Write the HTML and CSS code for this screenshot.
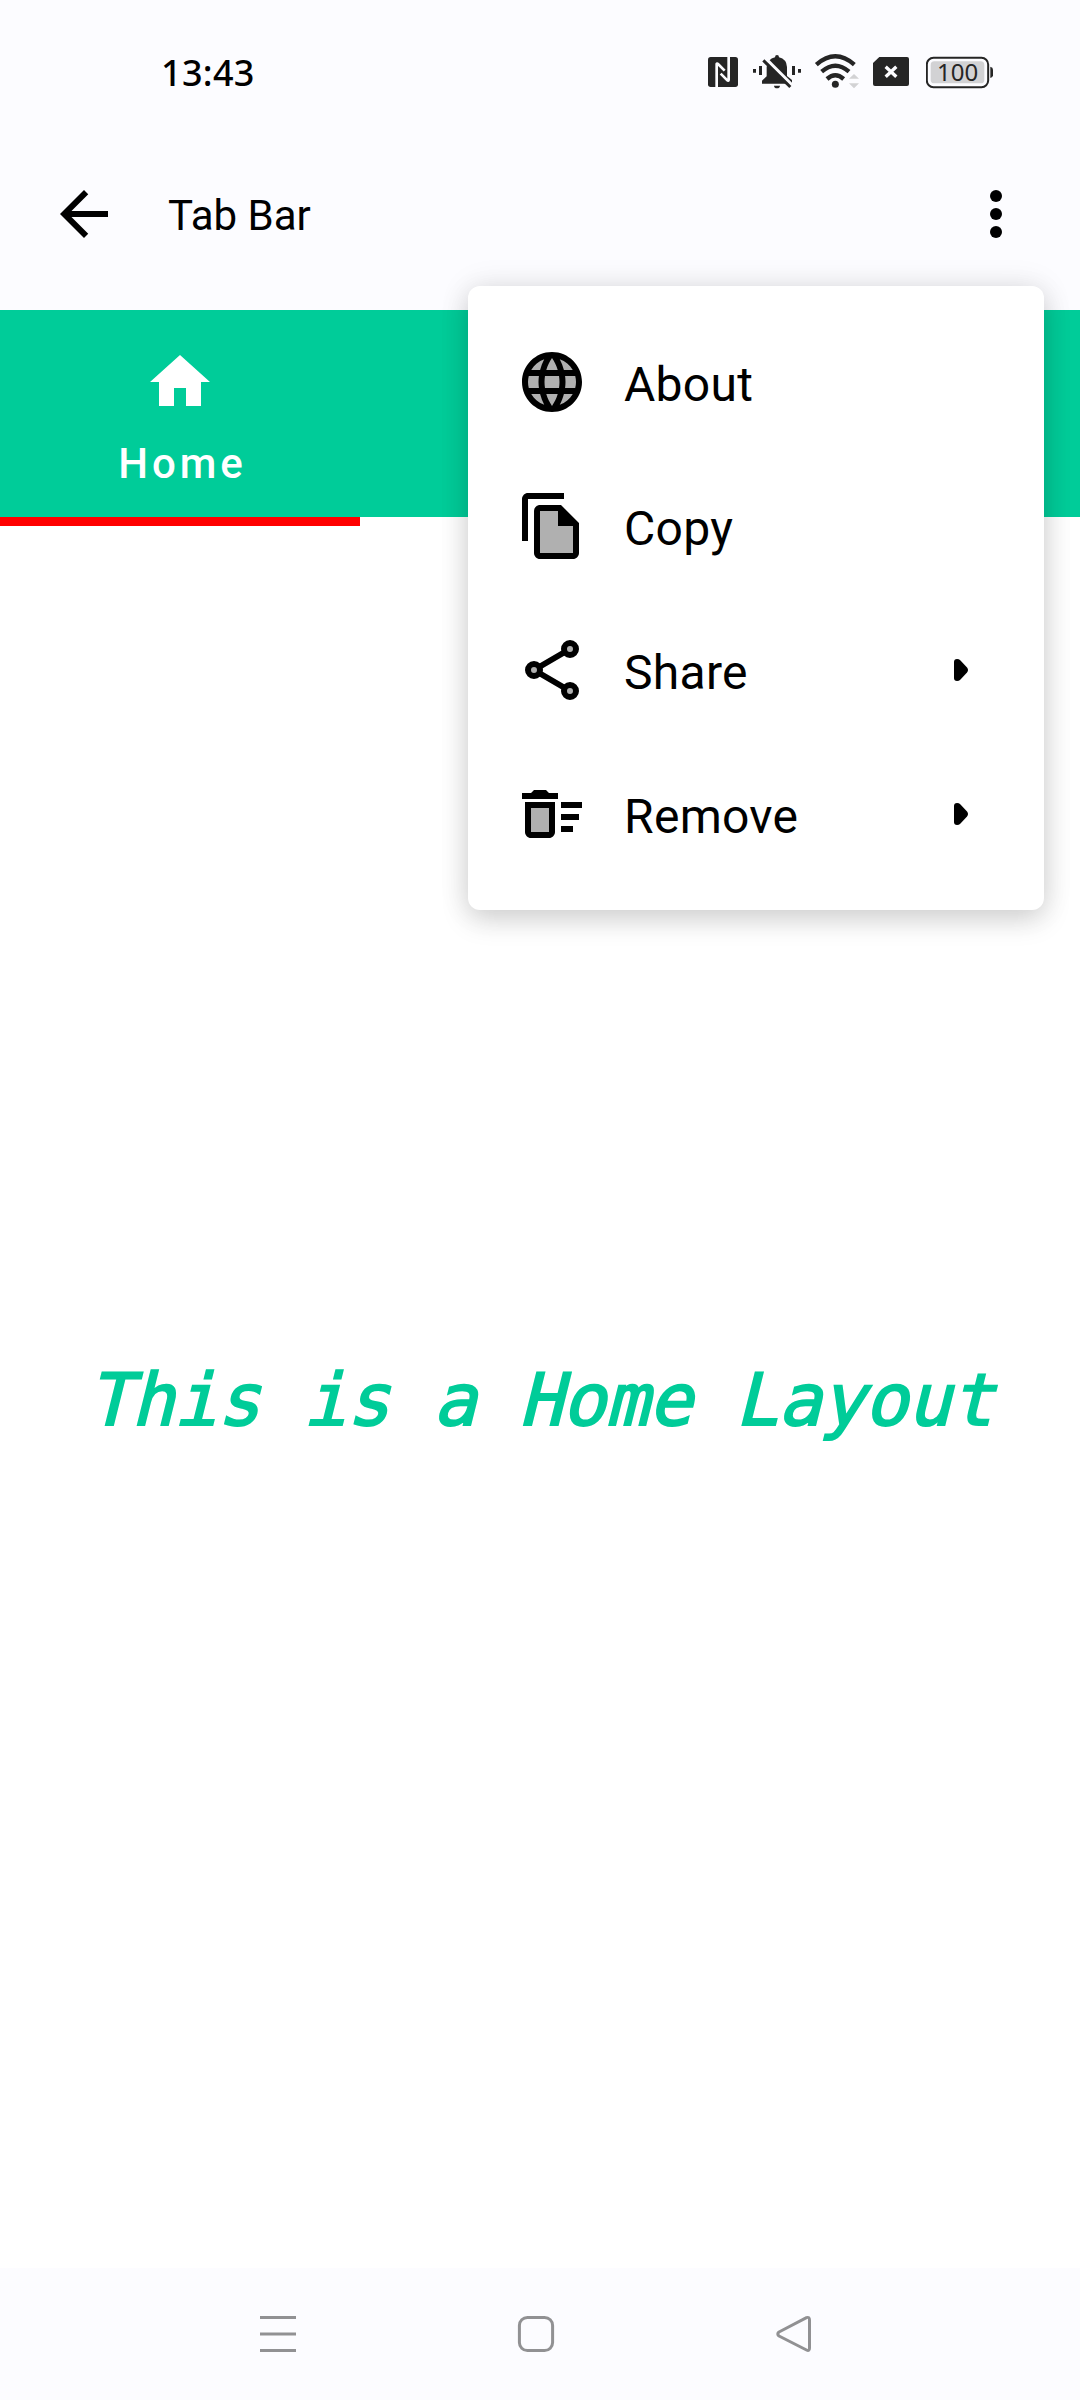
FILE: index.html
```html
<!DOCTYPE html>
<html lang="en">
<head>
<meta charset="utf-8">
<title>Tab Bar</title>
<link rel="stylesheet" href="styles.css">
</head>
<body>
<div class="screen">
  <header class="status">
    <span class="clock">13:43</span>
    <div class="indicators">
      <svg class="nfc" viewBox="84 72 90 105"><rect x="84" y="81" width="90" height="90" rx="8" fill="#252525"/><path d="M110 171V102Q111 99 114 102L134 122M146 81V150Q145 154 142 151L122 131" fill="none" stroke="#fcfcff" stroke-width="8"/></svg>
      <svg class="bell" viewBox="216 72 150 105"><g fill="#252525"><path d="M285 82Q285 75 291 75T297 82Q320 88 321 111V138L336 150V161H246V152L260 139V111Q262 88 285 82Z"/><path d="M282 167H300Q299 175 291 175T282 167Z"/><path d="M219 117h9v11h-9zM237 108h9v27h-9zM336 108h9v27h-9zM354 117h9v11h-9z"/></g><path d="M255 84L338 167" stroke="#fcfcff" stroke-width="10"/><path d="M250 91L331 171" stroke="#252525" stroke-width="9"/></svg>
      <svg class="wifi" viewBox="402 72 138 105"><g fill="none" stroke="#252525" stroke-width="13"><path d="M409 104Q466 54 523 104"/><path d="M425 125Q466 89 507 125"/><path d="M441 147Q466 125 491 147"/></g><circle cx="466" cy="163" r="10.500" fill="#252525"/><path d="M522 132l15 14h-30zM522 175l15-15h-30z" fill="#d2d2d4"/></svg>
      <svg class="sim" viewBox="579 72 108 105"><path d="M598 81H681Q687 81 687 87V162Q687 168 681 168H585Q579 168 579 162V99Z" fill="#252525"/><path d="M617 110L649 140M649 110L617 140" stroke="#fcfcff" stroke-width="10"/></svg>
      <svg class="battery" viewBox="738 72 201 105"><rect x="740.5" y="83.5" width="184" height="88" rx="20" fill="#fcfcff" stroke="#252525" stroke-width="6"/><rect x="752" y="94" width="161" height="66" rx="11" fill="#d2d2d4"/><path d="M931 110Q939 112 939 119V136Q939 142 931 144Z" fill="#252525"/><text x="833" y="153" text-anchor="middle" class="level">100</text></svg>
    </div>
  </header>

  <nav class="appbar">
    <svg class="icon" viewBox="0 0 24 24"><path d="M20 11H7.83l5.59-5.59L12 4l-8 8 8 8 1.41-1.41L7.83 13H20v-2z"/></svg>
    <h1 class="title">Tab Bar</h1>
    <svg class="icon" viewBox="0 0 24 24"><circle cx="12" cy="6" r="2"/><circle cx="12" cy="12" r="2"/><circle cx="12" cy="18" r="2"/></svg>
  </nav>

  <div class="tabs">
    <div class="tab">
      <svg class="icon home" viewBox="0 0 24 24"><path d="M10 20v-6h4v6h5v-8h3L12 3 2 12h3v8z"/></svg>
      <span class="tab-label">Home</span>
    </div>
  </div>

  <main class="content">
    <div class="tab-marker"></div>
    <p class="message">This is a Home Layout</p>
  </main>

  <footer class="navbar">
    <svg class="key" viewBox="0 0 48 48"><path d="M6 7.600h36M6 24h36M6 40.400h36"/></svg>
    <svg class="key" viewBox="0 0 48 48"><rect x="7.400" y="7.400" width="33.200" height="33.200" rx="8"/></svg>
    <svg class="key" viewBox="0 0 48 48"><path d="M9 22L36.500 7.700Q39.500 6.500 39.500 10V38Q39.500 41.500 36.500 40L9 26Q6.500 24 9 22Z"/></svg>
  </footer>

  <div class="menu">
    <div class="item">
      <svg class="icon" viewBox="0 0 24 24"><circle cx="12" cy="12" r="9" fill="#b0b0b0"/><path d="M11.990 2C6.470 2 2 6.480 2 12s4.470 10 9.990 10C17.520 22 22 17.520 22 12S17.520 2 11.990 2zm6.930 6h-2.950c-.32-1.250-.78-2.450-1.380-3.560 1.840.63 3.370 1.910 4.330 3.560zM12 4.040c.83 1.200 1.480 2.530 1.910 3.960h-3.820c.43-1.430 1.080-2.760 1.910-3.960zM4.260 14C4.100 13.360 4 12.690 4 12s.1-1.360.26-2h3.380c-.08.66-.14 1.320-.14 2s.06 1.340.14 2H4.260zm.82 2h2.950c.32 1.250.78 2.450 1.380 3.560-1.840-.63-3.370-1.900-4.330-3.560zm2.950-8H5.080c.96-1.660 2.490-2.930 4.330-3.560C8.810 5.550 8.350 6.750 8.030 8zM12 19.960c-.83-1.200-1.480-2.530-1.910-3.960h3.820c-.43 1.430-1.080 2.760-1.910 3.960zM14.340 14H9.660c-.09-.66-.16-1.320-.16-2s.07-1.350.16-2h4.680c.09.65.16 1.320.16 2s-.07 1.340-.16 2zm.25 5.560c.6-1.110 1.060-2.310 1.380-3.560h2.950c-.96 1.650-2.490 2.930-4.330 3.560zM16.360 14c.08-.66.14-1.320.14-2s-.06-1.340-.14-2h3.380c.16.64.26 1.310.26 2s-.1 1.360-.26 2h-3.380z"/></svg>
      <span class="label">About</span>
    </div>
    <div class="item">
      <svg class="icon" viewBox="0 0 24 24"><path d="M14 7H8v14h11v-9h-5z" fill="#b0b0b0"/><path d="M16 1H4c-1.100 0-2 .9-2 2v14h2V3h12V1zm-1 4H8c-1.100 0-1.990.9-1.990 2L6 21c0 1.100.89 2 1.990 2H19c1.100 0 2-.9 2-2V11l-6-6zm4 16H8V7h6v5h5v9z"/></svg>
      <span class="label">Copy</span>
    </div>
    <div class="item">
      <svg class="icon" viewBox="0 0 24 24"><path d="M6 12l12-7M6 12l12 7" stroke="#000" stroke-width="2"/><g fill="#b0b0b0" stroke="#000" stroke-width="2"><circle cx="18" cy="5" r="2"/><circle cx="6" cy="12" r="2"/><circle cx="18" cy="19" r="2"/></g></svg>
      <span class="label">Share</span>
      <svg class="caret" viewBox="0 0 14 22"><path d="M0 3Q0 0 3 0Q5 0 6 1L13 8.500Q15 11 13 13.500L6 21Q5 22 3 22Q0 22 0 19Z"/></svg>
    </div>
    <div class="item">
      <svg class="icon" viewBox="0 0 24 24"><path d="M5 10h6v8H5z" fill="#b0b0b0"/><path d="M15 16h4v2h-4zm0-8h7v2h-7zm0 4h6v2h-6zM3 18c0 1.100.9 2 2 2h6c1.100 0 2-.9 2-2V8H3v10zm2-8h6v8H5v-8zm5-6H6L5 5H2v2h12V5h-3z"/></svg>
      <span class="label">Remove</span>
      <svg class="caret" viewBox="0 0 14 22"><path d="M0 3Q0 0 3 0Q5 0 6 1L13 8.500Q15 11 13 13.500L6 21Q5 22 3 22Q0 22 0 19Z"/></svg>
    </div>
  </div>
</div>
</body>
</html>
```
FILE: styles.css
```css
* { box-sizing: border-box; }
body { margin: 0; background: #fff; font-family: Roboto, sans-serif; color: #000; }
svg { display: block; flex: none; }
.screen { position: relative; width: 1080px; height: 2400px; display: flex; flex-direction: column; overflow: hidden; }

.status { height: 118px; padding: 0 87px 0 161px; display: flex; justify-content: space-between; align-items: flex-start; background: #fcfcff; }
.clock { margin-top: 48px; font: 500 36px/49px "Noto Sans", sans-serif; letter-spacing: .3px; }
.indicators { display: flex; margin-top: 54px; }
.indicators svg { height: 35px; }
.nfc { width: 30px; margin-right: 14px; }
.bell { width: 50px; margin-right: 12px; }
.wifi { width: 46px; margin-right: 13px; }
.sim { width: 36px; margin-right: 17px; }
.battery { width: 67px; }
.level { font: 400 72px "Noto Sans", sans-serif; fill: #252525; }

.appbar { height: 192px; padding: 0 48px; display: flex; align-items: center; background: #fcfcff; }
.icon { width: 72px; height: 72px; }
.title { margin: 0; padding: 3px 0 0 48px; flex: 1; font-size: 42px; font-weight: 400; line-height: 50px; }

.tabs { height: 207px; background: #00cc99; display: flex; }
.tab { width: 360px; padding-top: 36px; display: flex; flex-direction: column; align-items: center; color: #fff; }
.home { fill: #fff; }
.tab-label { margin-top: 21px; padding-left: 5px; font-size: 42px; line-height: 50px; font-weight: 500; letter-spacing: 4px; }

.content { flex: 1; display: flex; flex-direction: column; background: #fff; }
.tab-marker { width: 360px; height: 9px; background: #f00; }
.message { margin: 832px 0 0 87px; font: 72px/84px "DejaVu Sans Mono", monospace; letter-spacing: -0.2px; white-space: nowrap; color: #00cc99; -webkit-text-stroke: 2px #00cc99; transform: skewX(-14deg); transform-origin: 0 70px; }

.navbar { height: 132px; padding: 42px 262px 0 254px; display: flex; justify-content: space-between; background: #fcfcff; }
.key { width: 48px; height: 48px; fill: none; stroke: #919193; stroke-width: 3; stroke-linejoin: round; }

.menu { position: absolute; left: 468px; top: 286px; width: 576px; height: 624px; padding: 24px 0; background: #fff; border-radius: 12px; box-shadow: 0 10px 28px rgba(0,0,0,.15), 0 0 32px rgba(0,0,0,.09); }
.item { height: 144px; padding: 0 76px 0 48px; display: flex; align-items: center; }
.label { flex: 1; padding: 5px 0 0 36px; font-size: 48px; line-height: 56px; letter-spacing: .3px; }
.caret { width: 14px; height: 22px; }
```
